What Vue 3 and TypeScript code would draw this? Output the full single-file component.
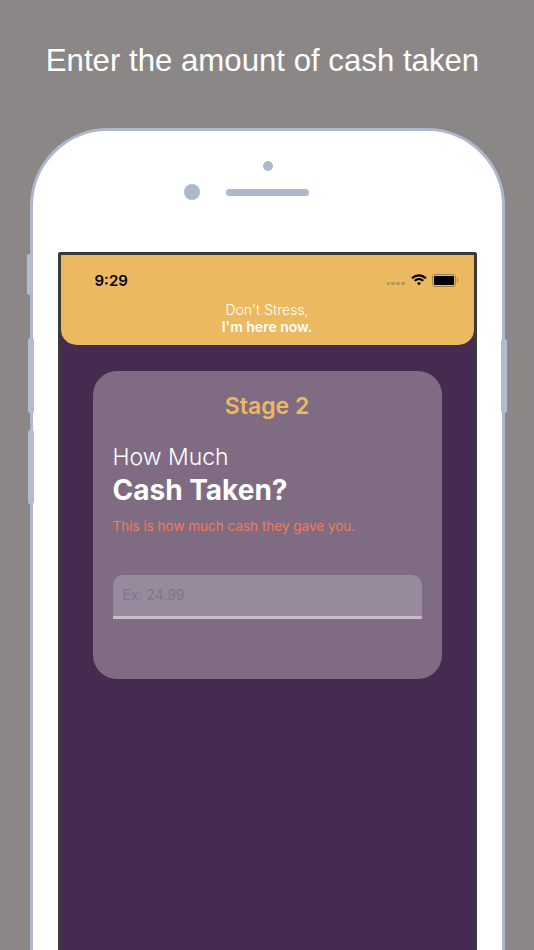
<script setup lang="ts">
const dots: number[] = [0, 1, 2, 3]
</script>

<template>
  <main class="page">
    <h1 class="headline">Enter the amount of cash taken</h1>
    <section class="phone">
      <span class="side side-mute"></span>
      <span class="side side-up"></span>
      <span class="side side-down"></span>
      <span class="side side-power"></span>
      <div class="sensors">
        <span class="speaker-dot"></span>
        <div class="sensor-row">
          <span class="camera"></span>
          <span class="speaker"></span>
        </div>
      </div>
      <div class="screen">
        <header class="app-header">
          <div class="status">
            <span class="time">9:29</span>
            <div class="status-icons">
              <div class="signal">
                <span v-for="d in dots" :key="d" class="signal-dot"></span>
              </div>
              <svg class="wifi" width="16" height="12" viewBox="0 0 16 12" aria-hidden="true">
                <path d="M1 4.2C5 .4 11 .4 15 4.2" fill="none" stroke="#000" stroke-width="2.1" />
                <path d="M3.7 6.8C6.2 4.5 9.8 4.5 12.3 6.8" fill="none" stroke="#000" stroke-width="2.1" />
                <path d="M6 9.1C7.2 8.1 8.8 8.1 10 9.1L8 11.4Z" fill="#000" />
              </svg>
              <div class="battery"><span class="battery-fill"></span></div>
              <span class="battery-cap"></span>
            </div>
          </div>
          <p class="tagline">Don't Stress,<br /><strong>I'm here now.</strong></p>
        </header>
        <div class="card">
          <h2 class="stage">Stage 2</h2>
          <p class="how">How Much</p>
          <p class="cash">Cash Taken?</p>
          <p class="hint">This is how much cash they gave you.</p>
          <input class="amount" type="text" placeholder="Ex: 24.99" />
        </div>
      </div>
    </section>
  </main>
</template>

<style>
html,
body {
  margin: 0;
  background: #8b8787;
}
</style>

<style scoped>
.page {
  height: 950px;
  width: 534px;
  overflow: hidden;
  background: #8b8787;
  display: flex;
  flex-direction: column;
  align-items: center;
  font-family: Inter, "Liberation Sans", sans-serif;
}
.headline {
  margin: 42px 9px 0 0;
  height: 38px;
  font: 400 31.2px/38px "Liberation Sans", Arial, sans-serif;
  color: #fff;
  white-space: nowrap;
}
.phone {
  position: relative;
  flex: none;
  box-sizing: border-box;
  margin-top: 48px;
  width: 475px;
  height: 900px;
  background: #fff;
  border: 3px solid #aeb8cb;
  border-radius: 78px 78px 0 0 / 78px 78px 0 0;
  padding-top: 121px;
  display: flex;
  flex-direction: column;
  align-items: center;
}
.side {
  position: absolute;
  background: #b2bccf;
  border-radius: 2px;
}
.side-mute { left: -6px; top: 123px; height: 41px; width: 5px; }
.side-up { left: -5px; top: 207px; height: 75px; width: 6px; }
.side-down { left: -5px; top: 299px; height: 74px; width: 6px; }
.side-power { right: -5px; top: 208px; height: 74px; width: 6px; }
.sensors {
  position: absolute;
  top: 30px;
  left: 1px;
  right: 0;
  display: flex;
  flex-direction: column;
  align-items: center;
}
.speaker-dot {
  width: 10px;
  height: 10px;
  border-radius: 50%;
  background: #aeb8cb;
}
.sensor-row {
  position: relative;
  margin-top: 18px;
  display: flex;
  align-items: center;
}
.camera {
  position: absolute;
  left: -42px;
  top: -5px;
  width: 16px;
  height: 16px;
  border-radius: 50%;
  background: #aeb8cb;
}
.speaker {
  width: 83px;
  height: 7px;
  border-radius: 4px;
  background: #aeb8cb;
}
.screen {
  box-sizing: border-box;
  width: 419px;
  flex: 1;
  background: #452b50;
  border: 3px solid #3a3a3a;
  border-bottom: 0;
  border-radius: 3px 3px 0 0;
  display: flex;
  flex-direction: column;
  align-items: center;
}
.app-header {
  box-sizing: border-box;
  width: 100%;
  height: 91px;
  background: #ebb95f;
  border-radius: 0 0 16px 16px;
  border-bottom: 1px solid #3c2a3d;
}
.status {
  height: 46px;
  display: flex;
  align-items: center;
  justify-content: space-between;
  padding: 4px 16px 0 34px;
  box-sizing: border-box;
}
.time {
  font-size: 15px;
  font-weight: 600;
  color: #000;
}
.status-icons {
  display: flex;
  align-items: center;
}
.signal {
  display: flex;
  gap: 1px;
  margin: 7px 6px 0 0;
}
.signal-dot {
  width: 3.7px;
  height: 3.7px;
  border-radius: 1px;
  background: #b3985e;
}
.wifi {
  margin-right: 5px;
}
.battery {
  box-sizing: border-box;
  width: 24px;
  height: 13px;
  padding: 1px;
  border: 1px solid #a08345;
  border-radius: 3px;
}
.battery-fill {
  display: block;
  height: 100%;
  background: #000;
  border-radius: 1px;
}
.battery-cap {
  margin-left: 1px;
  width: 1px;
  height: 4px;
  background: #a08345;
}
.tagline {
  margin: 0;
  text-align: center;
  font-size: 14px;
  line-height: 17px;
  font-weight: 300;
  color: #fff;
}
.tagline strong {
  font-weight: 600;
}
.card {
  box-sizing: border-box;
  width: 349px;
  height: 308px;
  margin-top: 25px;
  padding: 20px 20px 0;
  background: #7f6b82;
  border-radius: 24px;
  display: flex;
  flex-direction: column;
}
.stage {
  margin: 0;
  text-align: center;
  font-size: 23px;
  line-height: 30px;
  font-weight: 600;
  color: #ebb95f;
}
.how {
  margin: 21px 0 0;
  font-size: 23px;
  line-height: 30px;
  font-weight: 300;
  color: #fff;
}
.cash {
  margin: 1px 0 0;
  font-size: 28px;
  line-height: 34px;
  font-weight: 700;
  color: #fff;
}
.hint {
  margin: 10px 0 0;
  font-size: 13.5px;
  line-height: 18px;
  color: #f07a5c;
}
.amount {
  box-sizing: border-box;
  width: 100%;
  height: 44px;
  margin-top: 40px;
  padding: 0 10px 2px;
  border: 0;
  border-bottom: 3px solid #c8bccb;
  border-radius: 10px 10px 0 0;
  background: #978a9c;
  font: 400 14px Inter, sans-serif;
  outline: none;
}
.amount::placeholder {
  color: #85738a;
  opacity: 1;
}
</style>
